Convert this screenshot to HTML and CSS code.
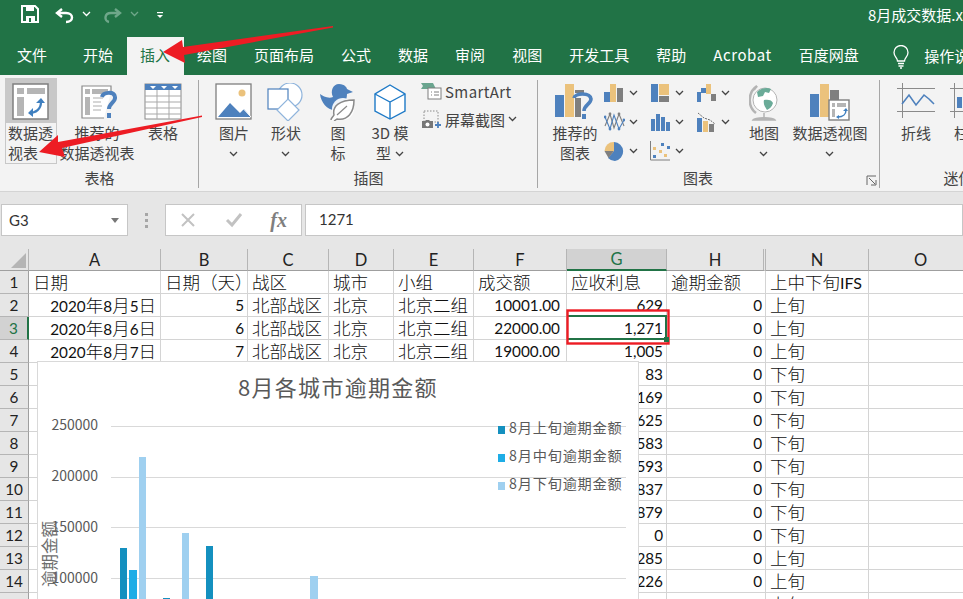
FILE: index.html
```html
<!DOCTYPE html>
<html lang="zh">
<head>
<meta charset="utf-8">
<title>8月成交数据.xlsx - Excel</title>
<link rel="stylesheet" href="styles.css">
</head>
<body>
<svg class="defs" width="0" height="0">
  <symbol id="chev" viewBox="0 0 9 6"><path d="M1 1l3.5 3.5L8 1" fill="none" stroke="#444" stroke-width="1.3"/></symbol>
</svg>
<div class="app">
  <header class="titlebar">
    <div class="qat">
      <svg class="qat-svg" width="180" height="30" viewBox="0 0 180 30">
        <path d="M22 6h13l3 3v13H22z" fill="none" stroke="#fff" stroke-width="2"/>
        <path d="M26 6h8v5h-8zM26 16h9v6h-9z" fill="#fff"/><path d="M29 18h2v4h-2z" fill="#217346"/>
        <path d="M62 9l-5 4 5 4" fill="none" stroke="#fff" stroke-width="2.4"/><path d="M58 13h8c8 0 8 9 0 9" fill="none" stroke="#fff" stroke-width="2.4"/>
        <path d="M83 12l3.5 3.5L90 12" fill="none" stroke="#fff" stroke-width="1.3"/>
        <path d="M115 9l5 4-5 4" fill="none" stroke="#6fa78a" stroke-width="2.4"/><path d="M119 13h-8c-7 0-7 8-2 9" fill="none" stroke="#6fa78a" stroke-width="2.4"/>
        <path d="M131 12l3.5 3.5 3.5-3.5" fill="none" stroke="#6fa78a" stroke-width="1.3"/>
        <path d="M157 12h6v1.2h-6z" fill="#fff"/><path d="M157 15h6l-3 3z" fill="#fff"/>
      </svg>
    </div>
    <div class="doc-title">8月成交数据.xlsx - Excel</div>
  </header>

  <nav class="tabs">
    <span class="tab tab-file">文件</span>
    <span class="tab">开始</span>
    <span class="tab tab-active">插入</span>
    <span class="tab">绘图</span>
    <span class="tab">页面布局</span>
    <span class="tab">公式</span>
    <span class="tab">数据</span>
    <span class="tab">审阅</span>
    <span class="tab">视图</span>
    <span class="tab">开发工具</span>
    <span class="tab">帮助</span>
    <span class="tab tab-latin">Acrobat</span>
    <span class="tab">百度网盘</span>
    <svg class="bulb" width="18" height="24" viewBox="0 0 18 24"><path d="M5.5 16c0-3-3.500-4.500-3.500-8.500a7 7 0 0 1 14 0c0 4-3.500 5.500-3.500 8.500z" fill="none" stroke="#fff" stroke-width="1.300"/><path d="M6 18.500h6M6.500 21h5M8 23h2" stroke="#fff" stroke-width="1.300"/></svg>
    <span class="tell">操作说明搜索</span>
  </nav>

  <section class="ribbon">
    <div class="group g-table">
      <div class="group-body">
        <div class="btn b-pivot selected">
          <div class="ic">
            <svg width="38" height="38" viewBox="0 0 38 38"><rect x="1" y="1" width="35" height="35" fill="#fff" stroke="#7f7f7f" stroke-width="1.500"/><path d="M5 5h7v6H5zM15 5h18v6H15zM5 14h7v19H5z" fill="#b5b5b5"/><path d="M17 30c7 0 12-4 12-11" fill="none" stroke="#3f7fbf" stroke-width="2.200"/><path d="M24 20l5-5 4 5zM21 25l-5 5 5 4z" fill="#3f7fbf"/></svg>
          </div>
          <div class="lbl lbl-left">数据透<br>视表</div>
        </div>
        <div class="btn b-rec">
          <div class="ic">
            <svg width="38" height="38" viewBox="0 0 38 38"><path d="M30 9V3H1v32h22" fill="#fff" stroke="#8a8a8a" stroke-width="1.200"/><path d="M4 6h5v5H4zM11 6h16v5H11zM4 14h5v18H4z" fill="#b5b5b5"/><path d="M12 15h10M12 19h8M12 23h9M12 27h8" stroke="#c9c9c9" stroke-width="1.500"/><path d="M21 14c1-5 12-6 13 0 1 5-6 6-6 12" fill="none" stroke="#4e81bd" stroke-width="4"/><rect x="26" y="30" width="4" height="5" fill="#4e81bd"/></svg>
          </div>
          <div class="lbl">推荐的<br>数据透视表</div>
        </div>
        <div class="btn b-tbl">
          <div class="ic">
            <svg width="38" height="38" viewBox="0 0 38 38"><rect x="1" y="1" width="36" height="35" fill="#fff" stroke="#8a8a8a"/><rect x="1" y="1" width="36" height="6" fill="#4e81bd"/><path d="M6 3h6l-3 3zM17 3h6l-3 3zM28 3h6l-3 3z" fill="#fff"/><path d="M1 13h36M1 19h36M1 25h36M1 31h36M13 7v29M25 7v29" stroke="#a9a9a9"/></svg>
          </div>
          <div class="lbl">表格</div>
        </div>
      </div>
      <div class="group-label">表格</div>
    </div>

    <div class="group g-illus">
      <div class="group-body">
        <div class="btn b50">
          <div class="ic">
            <svg width="38" height="38" viewBox="0 0 38 38"><rect x="1" y="1" width="35" height="35" fill="#fff" stroke="#7f7f7f" stroke-width="1.300"/><circle cx="27" cy="10" r="3.500" fill="#ebc27c"/><path d="M3 34l12-14 10 10 4-4 6 7v1z" fill="#4e81bd"/><path d="M19 22l3-3 14 15" fill="none" stroke="#fff"/></svg>
          </div>
          <div class="lbl">图片<br><svg class="chev" width="9" height="6"><use href="#chev"/></svg></div>
        </div>
        <div class="btn b50">
          <div class="ic">
            <svg width="40" height="38" viewBox="0 0 40 38"><circle cx="24" cy="12" r="12" fill="#fff" stroke="#8fb4dc" stroke-width="1.200"/><rect x="2" y="6" width="20" height="20" fill="#fff" stroke="#4e81bd" stroke-width="1.200"/><path d="M22 16l11 11-11 11-11-11z" fill="#fff" stroke="#8fb4dc" stroke-width="1.200"/></svg>
          </div>
          <div class="lbl">形状<br><svg class="chev" width="9" height="6"><use href="#chev"/></svg></div>
        </div>
        <div class="btn b50">
          <div class="ic">
            <svg width="38" height="38" viewBox="0 0 38 38"><path d="M1 11c3 2 8 5 13 3-3-6 0-13 6-13s8 4 8 5l6 3-6 2c0 6-3 14-11 16-8 1-15-7-16-16z" fill="#4e81bd"/><circle cx="24" cy="26" r="11" fill="#fff" opacity=".9"/><path d="M12 37c0-2 2-3 3-5-2-9 6-15 20-15 0 12-6 21-17 19l-3 2" fill="#fff" stroke="#8a8a8a" stroke-width="1.500"/><path d="M18 32l10-9" stroke="#8a8a8a" stroke-width="1.200"/></svg>
          </div>
          <div class="lbl">图<br>标</div>
        </div>
        <div class="btn b50">
          <div class="ic">
            <svg width="34" height="38" viewBox="0 0 34 38"><path d="M17 2l15 9v17l-15 8-15-8V11z" fill="#fff" stroke="#1e7ac7" stroke-width="1.400"/><path d="M2 11l15 8 15-8M17 19v17" fill="none" stroke="#1e7ac7" stroke-width="1.400"/></svg>
          </div>
          <div class="lbl">3D 模<br>型<svg class="chev chev-in" width="9" height="6"><use href="#chev"/></svg></div>
        </div>
        <div class="col-small">
          <div class="small-row">
            <svg width="21" height="17" viewBox="0 0 21 17"><path d="M0 0h12l3 6H0l2-3z" fill="#6aa58f"/><rect x="7" y="5" width="13" height="11" fill="#fff" stroke="#7f7f7f"/><path d="M10 9h1M13 9h5M10 12h1M13 12h5" stroke="#7f7f7f"/></svg>
            <span class="small-text smart">SmartArt</span>
          </div>
          <div class="small-row">
            <svg width="21" height="19" viewBox="0 0 21 19"><rect x="3" y="1" width="14" height="11" fill="none" stroke="#8a8a8a" stroke-dasharray="1.500 1.500"/><path d="M1 11h3l1-1h3l1 1h3v7H1z" fill="#777"/><circle cx="6.500" cy="14.500" r="2" fill="#fff"/><path d="M14 15h6M17 12v6" stroke="#4e81bd" stroke-width="1.800"/></svg>
            <span class="small-text">屏幕截图</span>
            <svg class="chev-s" width="9" height="6"><use href="#chev"/></svg>
          </div>
        </div>
      </div>
      <div class="group-label">插图</div>
    </div>

    <div class="group g-chart">
      <div class="group-body">
        <div class="btn b50">
          <div class="ic">
            <svg width="40" height="38" viewBox="0 0 40 38"><path d="M0 12h9v22H0z" fill="#4e81bd"/><path d="M10 1h9v33h-9z" fill="#ebc27c"/><path d="M20 7h9v3h-9z" fill="#7f7f7f"/><path d="M20 15h6v19h-6z" fill="#7f7f7f"/><path d="M19 15c1-5 16-6 17 1 0 5-7 6-7 12" fill="none" stroke="#4e81bd" stroke-width="3.600"/><rect x="27" y="31" width="4" height="5" fill="#4e81bd"/></svg>
          </div>
          <div class="lbl">推荐的<br>图表</div>
        </div>
        <div class="small-charts">
          <div class="mini"><svg width="21" height="18" viewBox="0 0 21 18"><path d="M0 8h6v10H0z" fill="#4e81bd"/><path d="M6 0h6v18H6z" fill="#ebc27c"/><path d="M13 4h6v14h-6z" fill="#7f7f7f"/></svg><svg class="chev-s" width="9" height="6"><use href="#chev"/></svg></div>
          <div class="mini"><svg width="21" height="20" viewBox="0 0 21 20"><g fill="none" stroke-width="1.100"><path d="M1 14l5-12 4 14 5-14 5 12" stroke="#7f7f7f"/><path d="M1 5l5 12 4-14 5 14 5-9" stroke="#4e81bd"/></g><g fill="#4e81bd"><circle cx="1" cy="5" r="1.400"/><circle cx="6" cy="17" r="1.400"/><circle cx="15" cy="17" r="1.400"/><circle cx="20" cy="8" r="1.400"/></g><g fill="#7f7f7f"><circle cx="6" cy="2" r="1.400"/><circle cx="15" cy="2" r="1.400"/></g></svg><svg class="chev-s" width="9" height="6"><use href="#chev"/></svg></div>
          <div class="mini"><svg width="21" height="20" viewBox="0 0 21 20"><path d="M10 10V1a9.500 9.500 0 0 1 1 18.900A9.500 9.500 0 0 1 4 17z" fill="#4e81bd"/><path d="M10 10V1a9 9 0 0 0-9.500 9z" fill="#ebc27c"/><path d="M10 10H.500l4 7z" fill="#7f7f7f"/></svg><svg class="chev-s" width="9" height="6"><use href="#chev"/></svg></div>
          <div class="mini"><svg width="21" height="18" viewBox="0 0 21 18"><rect x="1" width="7" height="18" fill="#4e81bd"/><rect x="9" width="10" height="11" fill="#ebc27c"/><rect x="9" y="12" width="10" height="6" fill="#7f7f7f"/></svg><svg class="chev-s" width="9" height="6"><use href="#chev"/></svg></div>
          <div class="mini"><svg width="21" height="18" viewBox="0 0 21 18"><path d="M1 6h4v12H1zM6 1h4v17H6zM11 4h4v14h-4zM16 9h4v9h-4z" fill="#4e81bd"/></svg><svg class="chev-s" width="9" height="6"><use href="#chev"/></svg></div>
          <div class="mini"><svg width="21" height="20" viewBox="0 0 21 20"><path d="M.500 0v19H20" fill="none" stroke="#7f7f7f"/><path d="M11 2h3v3h-3zM17 5h3v3h-3zM3 14h3v3H3z" fill="#4e81bd"/><path d="M3 6h3v3H3zM9 9h3v3H9zM14 13h3v3h-3z" fill="#ebc27c"/></svg><svg class="chev-s" width="9" height="6"><use href="#chev"/></svg></div>
          <div class="mini"><svg width="21" height="18" viewBox="0 0 21 18"><path d="M1 8h4v10H1z" fill="#4e81bd"/><path d="M5 4h5v5H5z" fill="#4e81bd"/><path d="M10 0h5v10h-5z" fill="#ebc27c"/><path d="M15 10h5v7h-5z" fill="#7f7f7f"/></svg><svg class="chev-s" width="9" height="6"><use href="#chev"/></svg></div>
          <div class="mini"><svg width="21" height="20" viewBox="0 0 21 20"><path d="M1 6h5v14H1z" fill="#4e81bd"/><path d="M7 9h5v11H7z" fill="#ebc27c"/><path d="M13 12h5v8h-5z" fill="#7f7f7f"/><path d="M2 1l6 5 6 2 5 4" fill="none" stroke="#6b6b6b" stroke-dasharray="2 1"/></svg><svg class="chev-s" width="9" height="6"><use href="#chev"/></svg></div>
        </div>
        <div class="btn b-map">
          <div class="ic">
            <svg width="30" height="38" viewBox="0 0 30 38"><path d="M8 3c-9 6-10 20-1 27" fill="none" stroke="#b4b4b4" stroke-width="2.500"/><circle cx="16" cy="17" r="12" fill="#fff" stroke="#b4b4b4"/><path d="M8 9c4-4 10-5 14-3l-2 4-4-1-2 4-5 1zM15 17c4-1 8 0 9 3-1 4-4 6-6 7-2-3-4-6-3-10z" fill="#6aab98"/><path d="M5 7l3-4" stroke="#b4b4b4" stroke-width="2"/><path d="M15 30v4M4 37c2-3 20-3 22 0z" fill="#b4b4b4" stroke="#b4b4b4" stroke-width="1.500"/></svg>
          </div>
          <div class="lbl">地图<br><svg class="chev" width="9" height="6"><use href="#chev"/></svg></div>
        </div>
        <div class="btn b-pchart">
          <div class="ic">
            <svg width="40" height="38" viewBox="0 0 40 38"><path d="M0 11h9v23H0z" fill="#4e81bd"/><path d="M10 1h9v33h-9z" fill="#ebc27c"/><path d="M20 7h9v14h-9z" fill="#7f7f7f"/><rect x="19" y="17" width="20" height="20" fill="#fff" stroke="#7f7f7f" stroke-width="1.400"/><path d="M22 20h3v4h-3zM27 20h9v4h-9zM22 26h3v8h-3z" fill="#b5b5b5"/><path d="M28 34c5 0 8-3 8-7" fill="none" stroke="#3f7fbf" stroke-width="1.500"/><path d="M33 28l3-3 2 3zM29 32l-3 2 3 2z" fill="#3f7fbf"/></svg>
          </div>
          <div class="lbl">数据透视图<br><svg class="chev" width="9" height="6"><use href="#chev"/></svg></div>
        </div>
      </div>
      <div class="group-label">图表</div>
      <svg class="launcher" width="11" height="11" viewBox="0 0 11 11"><path d="M1 10V1h9" fill="none" stroke="#666"/><path d="M3 3l6 6M5 10h5V5" fill="none" stroke="#666"/></svg>
    </div>

    <div class="group g-spark">
      <div class="group-body">
        <div class="btn b-spark">
          <div class="ic">
            <svg width="38" height="38" viewBox="0 0 38 38"><path d="M0 5.500h38M0 28.500h38M5.500 0v35" stroke="#8a8a8a" stroke-width="1"/><path d="M5 21l7-9 7 10 8-10 5 4 5 5" fill="none" stroke="#4e81bd" stroke-width="1.600"/></svg>
          </div>
          <div class="lbl">折线</div>
        </div>
        <div class="btn b-spark">
          <div class="ic">
            <svg width="38" height="38" viewBox="0 0 38 38"><path d="M0 5.500h38M0 28.500h38M4.500 0v35" stroke="#8a8a8a"/><path d="M7 14h5v11H7z" fill="#4e81bd"/></svg>
          </div>
          <div class="lbl">柱形</div>
        </div>
      </div>
      <div class="group-label">迷你图</div>
    </div>
  </section>

  <section class="fbar">
    <div class="namebox"><span>G3</span><i class="nb-arrow"></i></div>
    <div class="grip"><i></i><i></i><i></i></div>
    <div class="fbtns">
      <svg width="18" height="18" viewBox="0 0 18 18"><path d="M3 3l12 12M15 3L3 15" stroke="#c2c2c2" stroke-width="2"/></svg>
      <svg width="20" height="18" viewBox="0 0 20 18"><path d="M3 9l5 5 9-11" fill="none" stroke="#c2c2c2" stroke-width="3"/></svg>
      <span class="fx">fx</span>
    </div>
    <div class="finput">1271</div>
  </section>

  <section class="sheet">
    <table class="grid">
      <colgroup>
        <col class="w-rh"><col class="w-a"><col class="w-b"><col class="w-c"><col class="w-d"><col class="w-e"><col class="w-f"><col class="w-g"><col class="w-h"><col class="w-n"><col class="w-o">
      </colgroup>
      <thead>
        <tr>
          <th class="corner"><svg width="16" height="16" viewBox="0 0 16 16"><path d="M16 1v15H1z" fill="#b5b5b5"/></svg></th>
          <th>A</th><th>B</th><th>C</th><th>D</th><th>E</th><th>F</th><th class="cur">G</th><th class="hid">H</th><th>N</th><th>O</th>
        </tr>
      </thead>
      <tbody>
        <tr><th>1</th><td class="z">日期</td><td class="z">日期（天）</td><td class="z">战区</td><td class="z">城市</td><td class="z">小组</td><td class="z">成交额</td><td class="z">应收利息</td><td class="z">逾期金额</td><td class="z">上中下旬<span class="l">IFS</span></td><td></td></tr>
        <tr><th>2</th><td class="n dt">2020<span class="z">年</span>8<span class="z">月</span>5<span class="z">日</span></td><td class="n">5</td><td class="z">北部战区</td><td class="z">北京</td><td class="z">北京二组</td><td class="n amt">10001.00</td><td class="n">629</td><td class="n">0</td><td class="z">上旬</td><td></td></tr>
        <tr><th class="cur-row">3</th><td class="n dt">2020<span class="z">年</span>8<span class="z">月</span>6<span class="z">日</span></td><td class="n">6</td><td class="z">北部战区</td><td class="z">北京</td><td class="z">北京二组</td><td class="n amt">22000.00</td><td class="n sel">1,271</td><td class="n">0</td><td class="z">上旬</td><td></td></tr>
        <tr><th>4</th><td class="n dt">2020<span class="z">年</span>8<span class="z">月</span>7<span class="z">日</span></td><td class="n">7</td><td class="z">北部战区</td><td class="z">北京</td><td class="z">北京二组</td><td class="n amt">19000.00</td><td class="n">1,005</td><td class="n">0</td><td class="z">上旬</td><td></td></tr>
        <tr><th>5</th><td colspan="6"></td><td class="n">83</td><td class="n">0</td><td class="z">下旬</td><td></td></tr>
        <tr><th>6</th><td colspan="6"></td><td class="n">1,169</td><td class="n">0</td><td class="z">下旬</td><td></td></tr>
        <tr><th>7</th><td colspan="6"></td><td class="n">1,625</td><td class="n">0</td><td class="z">下旬</td><td></td></tr>
        <tr><th>8</th><td colspan="6"></td><td class="n">1,583</td><td class="n">0</td><td class="z">下旬</td><td></td></tr>
        <tr><th>9</th><td colspan="6"></td><td class="n">1,593</td><td class="n">0</td><td class="z">下旬</td><td></td></tr>
        <tr><th>10</th><td colspan="6"></td><td class="n">1,837</td><td class="n">0</td><td class="z">下旬</td><td></td></tr>
        <tr><th>11</th><td colspan="6"></td><td class="n">1,879</td><td class="n">0</td><td class="z">下旬</td><td></td></tr>
        <tr><th>12</th><td colspan="6"></td><td class="n">0</td><td class="n">0</td><td class="z">下旬</td><td></td></tr>
        <tr><th>13</th><td colspan="6"></td><td class="n">1,285</td><td class="n">0</td><td class="z">上旬</td><td></td></tr>
        <tr><th>14</th><td colspan="6"></td><td class="n">1,226</td><td class="n">0</td><td class="z">上旬</td><td></td></tr>
        <tr><th>15</th><td colspan="6"></td><td class="n"></td><td class="n">0</td><td class="z">上旬</td><td></td></tr>
      </tbody>
    </table>

    <figure class="chart">
      <svg width="602" height="240" viewBox="37 361 602 240">
        <text class="ch-title" x="238" y="396">8月各城市逾期金额</text>
        <g class="ch-grid"><path d="M111 426.500h515M111 477.500h515M111 527.500h515M111 578.500h515"/></g>
        <g class="ch-y" text-anchor="end">
          <text x="98" y="430">250000</text><text x="98" y="481">200000</text><text x="98" y="532">150000</text><text x="98" y="583">100000</text>
        </g>
        <text class="ch-axis" transform="translate(56 587) rotate(-90)">逾期金额</text>
        <g class="bar1"><rect x="120" y="548" width="7" height="60"/><rect x="163" y="598" width="7" height="10"/><rect x="206" y="546" width="7" height="60"/></g>
        <g class="bar2"><rect x="129" y="570" width="8" height="40"/></g>
        <g class="bar3"><rect x="139" y="457" width="7" height="150"/><rect x="182" y="533" width="7" height="70"/><rect x="310" y="576" width="8" height="30"/></g>
        <g class="ch-legend">
          <rect class="leg1" x="498" y="426" width="7" height="8"/><text x="509" y="433">8月上旬逾期金额</text>
          <rect class="leg2" x="498" y="454" width="7" height="8"/><text x="509" y="461">8月中旬逾期金额</text>
          <rect class="leg3" x="498" y="482" width="7" height="8"/><text x="509" y="489">8月下旬逾期金额</text>
        </g>
      </svg>
    </figure>
  </section>

  <svg class="marks" width="963" height="599" viewBox="0 0 963 599">
    <rect x="567.500" y="310.500" width="101" height="33" fill="none" stroke="#ed1c24" stroke-width="2.400"/>
    <path d="M333 26L333 27.500 184 55 185 63 163 52 182 40 183 47z" fill="#ed1c24"/>
    <path d="M202 115.500L202 117 62 148 65 157 39 152 58 135 58 142z" fill="#ed1c24"/>
  </svg>
</div>
</body>
</html>
```

FILE: styles.css
```css
* { box-sizing: border-box; }
html, body { margin: 0; padding: 0; overflow: hidden; }
body { width: 963px; height: 599px; background: #fff; font-family: "Noto Sans CJK SC", "Liberation Sans", sans-serif; }
.defs { position: absolute; }
.app { position: relative; width: 963px; height: 599px; overflow: hidden; display: flex; flex-direction: column; }

.titlebar { height: 37px; flex: none; display: flex; background: #217346; color: #fff; overflow: hidden; }
.qat { width: 868px; flex: none; }
.qat-svg { display: block; margin-top: 0; }
.doc-title { font-size: 15px; line-height: 30px; white-space: nowrap; }

.tabs { height: 38px; flex: none; display: flex; align-items: stretch; background: #217346; color: #fff; font-size: 15px; overflow: hidden; }
.tab { padding: 0 13.5px; line-height: 36px; white-space: nowrap; flex: none; }
.tab-file { margin-left: 3.5px; margin-right: 9px; }
.tab-active { background: #f3f3f3; color: #217346; }
.tab-latin { letter-spacing: .6px; }
.bulb { flex: none; margin: 8px 0 0 20px; }
.tell { margin-left: 14px; line-height: 37px; white-space: nowrap; flex: none; }

.ribbon { height: 117px; flex: none; display: flex; background: #f3f3f3; border-bottom: 1px solid #d4d4d4; overflow: hidden; color: #444; font-size: 15px; padding-top: 3px; }
.group { position: relative; display: flex; flex-direction: column; height: 110px; flex: none; }
.group:not(:last-child)::after { content: ""; position: absolute; right: 0; top: 2px; bottom: 0; width: 1px; background: #a6a6a6; }
.group-body { display: flex; height: 90px; }
.group-label { font-size: 15px; line-height: 20px; text-align: center; }
.g-table { width: 199px; }
.g-table .group-body { padding-left: 5px; }
.g-illus { width: 339px; }
.g-illus .group-body { padding-left: 9px; }
.g-chart { width: 342px; }
.g-chart .group-body { padding-left: 11px; }
.g-chart .group-label { padding-right: 22px; }
.g-spark { width: 172px; }
.g-spark .group-body { padding-left: 16px; }

.btn { display: flex; flex-direction: column; align-items: center; flex: none; height: 86px; }
.ic { height: 45px; display: flex; align-items: center; justify-content: center; padding-top: 3px; flex: none; }
.ic svg { display: block; }
.lbl { line-height: 20px; text-align: center; white-space: nowrap; }
.lbl-left { text-align: left; align-self: flex-start; padding-left: 2px; }
.b-pivot { width: 52px; }
.selected { background: linear-gradient(#c8c8c8 45px, #f3f3f3 45px); border: 1px solid #c8c8c8; border-top: 0; }
.selected .ic { width: 100%; }
.b-rec { width: 80px; margin-left: 0; }
.b-rec .ic { padding-left: 6px; }
.b-tbl { width: 46px; margin-left: 3px; }
.b50 { width: 52px; }
.chev { display: inline-block; vertical-align: 2px; }
.chev-in { margin-left: 4px; vertical-align: 2px; }
.chev-s { flex: none; }

.col-small { margin-left: 5px; width: 110px; display: flex; flex-direction: column; padding-top: 3px; gap: 8px; }
.small-row { display: flex; align-items: center; height: 20px; gap: 3px; white-space: nowrap; }
.small-text { font-size: 15px; }
.smart { letter-spacing: .4px; }

.small-charts { display: grid; grid-template-columns: 46px 46px 46px; grid-template-rows: 29px 29px 29px; grid-auto-flow: column; width: 138px; margin: 0 0 0 3px; height: 87px; }
.mini { display: flex; align-items: center; gap: 3.5px; }
.mini svg:first-child { flex: none; width: 21px; }
.b-map { width: 40px; margin-left: 2px; }
.b-pchart { width: 80px; margin-left: 6px; }
.launcher { position: absolute; right: 3px; bottom: 2px; }
.b-spark { width: 40px; margin-right: 13px; }

.fbar { height: 57px; flex: none; display: flex; align-items: flex-start; background: #e6e6e6; padding: 12px 0 0 1px; }
.namebox { width: 127px; height: 32px; background: #fff; border: 1px solid #c6c6c6; display: flex; align-items: center; justify-content: space-between; padding: 0 8px 0 7px; font: 15px "Lato", sans-serif; color: #333; flex: none; }
.nb-arrow { width: 0; height: 0; border: 4px solid transparent; border-top: 5px solid #777; border-bottom: 0; }
.grip { width: 37px; flex: none; display: flex; flex-direction: column; align-items: center; gap: 3px; padding-top: 9px; }
.grip i { width: 3px; height: 3px; background: #a6a6a6; display: block; }
.fbtns { width: 137px; height: 32px; flex: none; background: #fff; border: 1px solid #c6c6c6; display: flex; align-items: center; justify-content: space-between; padding: 0 14px 0 13px; }
.fx { font: italic bold 20px/1 "Liberation Serif", serif; color: #7f7f7f; }
.finput { margin-left: 3px; flex: 1; height: 32px; background: #fff; border: 1px solid #c6c6c6; font: 15px/29px "Lato", sans-serif; color: #333; padding-left: 13px; }

.sheet { position: relative; flex: 1; min-height: 0; overflow: hidden; background: #fff; }
.grid { width: 973px; table-layout: fixed; border-collapse: separate; border-spacing: 0; font: 400 15.3px "Lato", "Noto Sans CJK SC", sans-serif; color: #111; }
.w-rh { width: 29px; } .w-a { width: 132px; } .w-b { width: 87px; } .w-c { width: 81px; } .w-d { width: 65px; } .w-e { width: 80px; } .w-f { width: 93px; } .w-g { width: 100px; } .w-h { width: 99px; } .w-n { width: 103px; } .w-o { width: 104px; }
.grid th { padding: 0; font-weight: 400; background: #e6e6e6; color: #222; border-right: 1px solid #b5b5b5; border-bottom: 1px solid #b5b5b5; text-align: center; height: 23px; }
.grid thead th { height: 22px; font-size: 16.5px; border-bottom-color: #9f9f9f; }
.grid tbody th { border-right-color: #9f9f9f; }
.corner { position: relative; text-align: right; }
.corner svg { display: block; margin-left: 10px; }
.grid th.cur { background: #d2d2d2; color: #217346; border-bottom: 2px solid #217346; }
.grid th.hid { border-right: 3px double #b5b5b5; }
.grid th.cur-row { background: #d2d2d2; color: #217346; border-right: 2px solid #217346; }
.grid td { height: 23px; padding: 0 3px 0 4px; border-right: 1px solid #d4d4d4; border-bottom: 1px solid #d4d4d4; white-space: nowrap; overflow: hidden; }
.n { text-align: right; }
.grid td.amt { padding-right: 6px; }
.grid td.dt { padding-right: 4px; }
.z { font-size: 17.5px; font-family: "Noto Sans CJK SC", sans-serif; font-weight: 300; line-height: 20px; }
.l { font: 400 16px "Lato", sans-serif; }
.grid td.sel { position: relative; overflow: visible; }
.sel::after { content: ""; position: absolute; left: 0; top: -2px; right: -1px; bottom: -1px; border: 2px solid #217346; border-left: 0; }
.sel::before { content: ""; position: absolute; right: -3px; bottom: -3px; width: 5px; height: 5px; background: #217346; z-index: 1; }

.chart { position: absolute; left: 37px; top: 112px; margin: 0; width: 602px; height: 240px; background: #fff; border: 1px solid #d9d9d9; border-bottom: 0; overflow: hidden; }
.chart svg { display: block; margin: -1px; }
.ch-title { font: 22px "Noto Sans CJK SC", sans-serif; letter-spacing: 1.3px; fill: #595959; }
.ch-grid path { stroke: #d9d9d9; fill: none; }
.ch-y text { font: 14px "Noto Sans CJK SC", sans-serif; fill: #595959; }
.ch-axis { font: 16.5px "Noto Sans CJK SC", sans-serif; fill: #6e6e6e; }
.bar1 rect, .leg1 { fill: #1490bf; }
.bar2 rect, .leg2 { fill: #1eade6; }
.bar3 rect, .leg3 { fill: #9fd0f0; }
.ch-legend text { font: 14.2px "Noto Sans CJK SC", sans-serif; letter-spacing: .8px; fill: #595959; }

.marks { position: absolute; left: 0; top: 0; pointer-events: none; }
```
